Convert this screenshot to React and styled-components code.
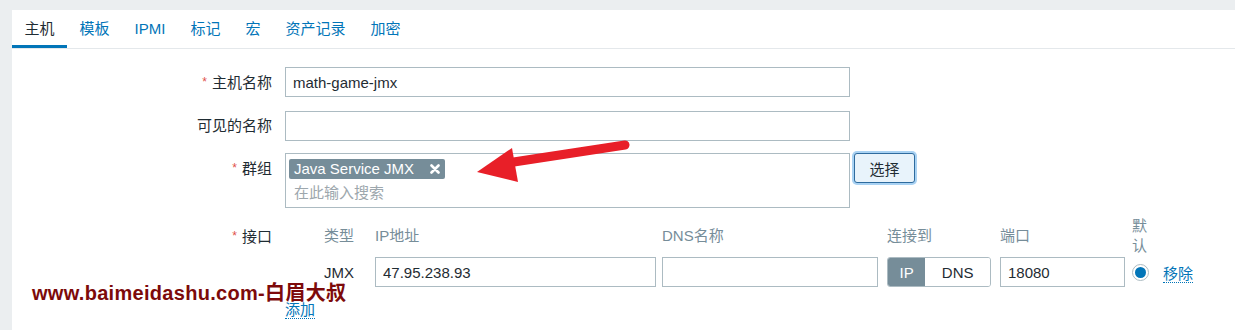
import React from 'react'
import styled, { createGlobalStyle } from 'styled-components'

const tabs = ['主机', '模板', 'IPMI', '标记', '宏', '资产记录', '加密']

const App = () => (
  <Page>
    <GlobalStyle />
    <Panel>
      <TabBar>
        {tabs.map((t, i) => (
          <Tab key={t} $active={i === 0}>{t}</Tab>
        ))}
      </TabBar>
      <Form>
        <Label $required>主机名称</Label>
        <Field>
          <TextInput $width={565} defaultValue="math-game-jmx" />
        </Field>

        <Label>可见的名称</Label>
        <Field>
          <TextInput $width={565} />
        </Field>

        <Label $required $shift={-1}>群组</Label>
        <Field $shift={-1}>
          <MultiSelect>
            <Tag>
              Java Service JMX
              <svg width="10" height="10" viewBox="0 0 10 10">
                <path d="M1.5 1.5 L8.5 8.5 M8.5 1.5 L1.5 8.5" stroke="#fff" strokeWidth="2.6" strokeLinecap="round" />
              </svg>
            </Tag>
            <Placeholder>在此输入搜索</Placeholder>
          </MultiSelect>
          <SelectButton>选择</SelectButton>
        </Field>

        <Label $required>接口</Label>
        <Field $column>
          <IfaceTable>
            <Head $first>类型</Head>
            <Head>IP地址</Head>
            <Head>DNS名称</Head>
            <Head>连接到</Head>
            <Head>端口</Head>
            <Head $narrow>默认</Head>
            <Head />

            <Cell $first>JMX</Cell>
            <Cell><TextInput $width={281} defaultValue="47.95.238.93" /></Cell>
            <Cell><TextInput $width={216} /></Cell>
            <Cell>
              <Toggle>
                <ToggleItem $active>IP</ToggleItem>
                <ToggleItem>DNS</ToggleItem>
              </Toggle>
            </Cell>
            <Cell><TextInput $width={125} defaultValue="18080" /></Cell>
            <Cell><Radio /></Cell>
            <Cell><Link>移除</Link></Cell>
          </IfaceTable>
          <AddRow><Link>添加</Link></AddRow>
        </Field>
      </Form>
    </Panel>

    <Watermark>www.baimeidashu.com-白眉大叔</Watermark>

    <Arrow width="170" height="50" viewBox="0 0 170 50">
      <path d="M163 10 L45 28" stroke="#e81f28" strokeWidth="9" strokeLinecap="round" />
      <polygon points="15,37 50,13 56,47" fill="#e81f28" />
    </Arrow>
  </Page>
)

export default App

const GlobalStyle = createGlobalStyle`
  html, body {
    margin: 0;
    padding: 0;
    background: #ebeef0;
  }
  body {
    font-family: "Liberation Sans", Arial, "Noto Sans CJK SC", sans-serif;
    font-size: 15px;
    color: #1f2c33;
  }
`

const Page = styled.div`
  position: relative;
  width: 1235px;
  height: 330px;
  overflow: hidden;
  padding: 10px 0 0 12px;
  box-sizing: border-box;
`

const Panel = styled.div`
  background: #fff;
  height: 320px;
`

const TabBar = styled.div`
  display: flex;
  height: 38px;
  border-bottom: 1px solid #e4e8eb;
`

const Tab = styled.div`
  display: flex;
  align-items: center;
  padding: 2px 12.5px 0;
  box-sizing: border-box;
  height: 38px;
  line-height: 20px;
  color: ${p => (p.$active ? '#1f2c33' : '#0275b8')};
  border-bottom: 3px solid ${p => (p.$active ? '#0275b8' : 'transparent')};
`

const Form = styled.div`
  display: grid;
  grid-template-columns: 260px 1fr;
  column-gap: 13px;
  row-gap: 13px;
  padding-top: 18px;
`

const Label = styled.div`
  text-align: right;
  line-height: 30px;
  margin-top: ${p => p.$shift || 0}px;

  &::before {
    content: ${p => (p.$required ? '"*"' : 'none')};
    color: #e0504a;
    font-size: 12px;
    margin-right: 5px;
    vertical-align: 2px;
  }
`

const Field = styled.div`
  display: flex;
  flex-direction: ${p => (p.$column ? 'column' : 'row')};
  align-items: flex-start;
  gap: 4px;
  margin-top: ${p => p.$shift || 0}px;
`

const TextInput = styled.input`
  width: ${p => p.$width}px;
  height: 30px;
  box-sizing: border-box;
  border: 1px solid #acbbc2;
  padding: 0 7px;
  font: inherit;
  color: #1f2c33;
  background: #fff;
  outline: none;
`

const MultiSelect = styled.div`
  width: 565px;
  height: 55px;
  box-sizing: border-box;
  border: 1px solid #acbbc2;
  padding: 5px 3px 0;
`

const Tag = styled.span`
  display: inline-flex;
  align-items: center;
  gap: 16px;
  height: 20px;
  padding: 0 5px;
  background: #768d99;
  color: #fff;
  border-radius: 2px;
  line-height: 20px;
`

const Placeholder = styled.div`
  color: #9da7ad;
  line-height: 20px;
  margin-top: 4px;
  padding-left: 5px;
`

const SelectButton = styled.button`
  width: 61px;
  height: 30px;
  font: inherit;
  color: #1f2c33;
  background: #e8f3fb;
  border: 1px solid #2e6b9e;
  border-radius: 3px;
  box-shadow: 0 0 0 2px #a9d2f3;
  padding: 0;
`

const IfaceTable = styled.div`
  display: grid;
  grid-template-columns: 90px 287px 225px 113px 132px 31px auto;
  grid-template-rows: 40px 30px;
  row-gap: 1px;
  margin-top: -5px;
`

const Head = styled.div`
  display: flex;
  align-items: center;
  color: #768d99;
  line-height: 20px;
  padding-left: ${p => (p.$first ? '39px' : '0')};
  width: ${p => (p.$narrow ? '16px' : 'auto')};
`

const Cell = styled.div`
  display: flex;
  align-items: center;
  padding-left: ${p => (p.$first ? '39px' : '0')};
`

const Toggle = styled.div`
  display: flex;
  width: 104px;
  height: 30px;
  box-sizing: border-box;
  border: 1px solid #acbbc2;
  border-radius: 3px;
  overflow: hidden;
`

const ToggleItem = styled.div`
  display: flex;
  align-items: center;
  justify-content: center;
  width: ${p => (p.$active ? '38px' : '66px')};
  background: ${p => (p.$active ? '#768d99' : '#fff')};
  color: ${p => (p.$active ? '#fff' : '#1f2c33')};
`

const Radio = styled.span`
  display: inline-flex;
  align-items: center;
  justify-content: center;
  width: 17px;
  height: 17px;
  box-sizing: border-box;
  border: 1px solid #acbbc2;
  border-radius: 50%;

  &::after {
    content: "";
    width: 11px;
    height: 11px;
    border-radius: 50%;
    background: #0275b8;
  }
`

const Link = styled.span`
  color: #0275b8;
  line-height: 16px;
  border-bottom: 1px dotted #0275b8;
  margin-top: 4px;
`

const AddRow = styled.div`
  margin-top: 7px;
  display: flex;
`

const Watermark = styled.div`
  position: absolute;
  left: 32px;
  top: 285px;
  font-family: "Liberation Sans", "Noto Sans CJK SC", sans-serif;
  font-weight: bold;
  font-size: 20px;
  line-height: 17px;
  letter-spacing: 0.3px;
  color: #7d0a0a;
  white-space: nowrap;
`

const Arrow = styled.svg`
  position: absolute;
  left: 462px;
  top: 135px;
`
